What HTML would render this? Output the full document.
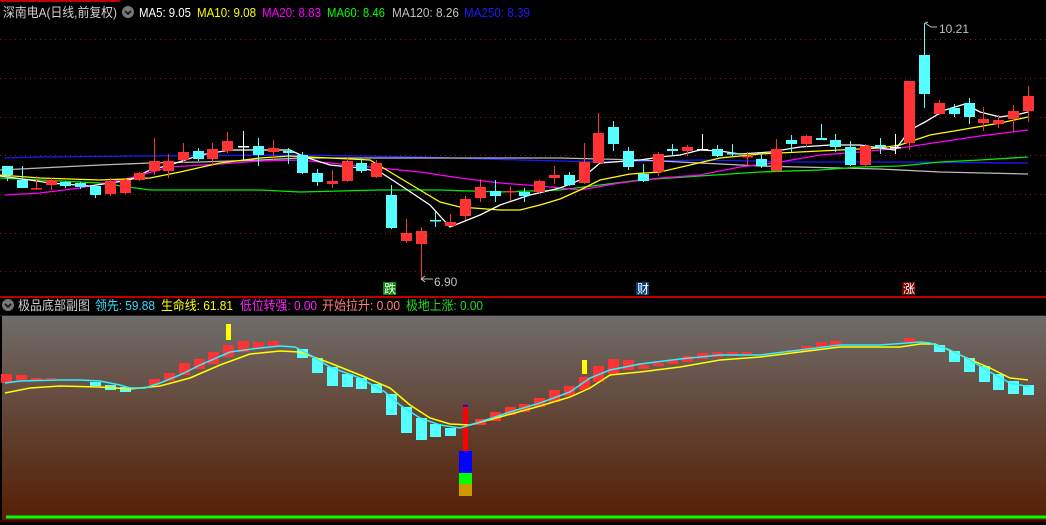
<!DOCTYPE html>
<html><head><meta charset="utf-8">
<style>
html,body{margin:0;padding:0;background:#000;width:1046px;height:525px;overflow:hidden}
svg{position:absolute;left:0;top:0}
text{font-family:"Liberation Sans","Noto Sans CJK SC",sans-serif}
</style></head>
<body>
<svg id="s" width="1046" height="525" xmlns="http://www.w3.org/2000/svg">
<defs>
<linearGradient id="g" x1="0" y1="0" x2="0" y2="1">
<stop offset="0" stop-color="#6f6c6b"/>
<stop offset="0.5" stop-color="#624434"/>
<stop offset="1" stop-color="#551f05"/>
</linearGradient>
</defs>
<rect x="0" y="0" width="1046" height="525" fill="#000"/>
<line x1="0" y1="1" x2="120" y2="1" stroke="#c00000" stroke-width="2"/>
<g id="grid" stroke="#8a1a1a" stroke-width="1" stroke-dasharray="1,4"></g>
<g id="top"></g>
<line x1="0" y1="297" x2="1046" y2="297" stroke="#c00000" stroke-width="2"/>
<rect x="2" y="316" width="1044" height="204" fill="url(#g)"/>
<line x1="0" y1="315.5" x2="1046" y2="315.5" stroke="#222" stroke-width="1"/>
<g id="bot"></g>
<line x1="6" y1="517" x2="1046" y2="517" stroke="#00ff00" stroke-width="3"/>
<line x1="0" y1="521" x2="1046" y2="521" stroke="#a00000" stroke-width="1"/>

<!-- header top -->
<text x="3" y="17" font-size="13" fill="#d0d0d0" textLength="114" lengthAdjust="spacingAndGlyphs">深南电A(日线,前复权)</text>
<circle cx="128" cy="12" r="6" fill="#777"/>
<path d="M125 11 L128 14 L131 11" stroke="#111" stroke-width="1.6" fill="none"/>
<text x="139" y="17" font-size="13" fill="#ffffff" textLength="52" lengthAdjust="spacingAndGlyphs">MA5: 9.05</text>
<text x="197" y="17" font-size="13" fill="#ffff00" textLength="59" lengthAdjust="spacingAndGlyphs">MA10: 9.08</text>
<text x="262" y="17" font-size="13" fill="#ff00ff" textLength="59" lengthAdjust="spacingAndGlyphs">MA20: 8.83</text>
<text x="327" y="17" font-size="13" fill="#00ff00" textLength="58" lengthAdjust="spacingAndGlyphs">MA60: 8.46</text>
<text x="392" y="17" font-size="13" fill="#c0c0c0" textLength="67" lengthAdjust="spacingAndGlyphs">MA120: 8.26</text>
<text x="464" y="17" font-size="13" fill="#1a1aff" textLength="66" lengthAdjust="spacingAndGlyphs">MA250: 8.39</text>

<!-- header bottom -->
<circle cx="8" cy="305" r="6" fill="#777"/>
<path d="M5 304 L8 307 L11 304" stroke="#111" stroke-width="1.6" fill="none"/>
<text x="18" y="310" font-size="13" fill="#d0d0d0" textLength="72" lengthAdjust="spacingAndGlyphs">极品底部副图</text>
<text x="95" y="310" font-size="13" fill="#33ddff" textLength="60" lengthAdjust="spacingAndGlyphs">领先: 59.88</text>
<text x="161" y="310" font-size="13" fill="#ffff00" textLength="72" lengthAdjust="spacingAndGlyphs">生命线: 61.81</text>
<text x="240" y="310" font-size="13" fill="#ff22ff" textLength="77" lengthAdjust="spacingAndGlyphs">低位转强: 0.00</text>
<text x="322" y="310" font-size="13" fill="#ff8080" textLength="78" lengthAdjust="spacingAndGlyphs">开始拉升: 0.00</text>
<text x="406" y="310" font-size="13" fill="#22dd22" textLength="77" lengthAdjust="spacingAndGlyphs">极地上涨: 0.00</text>

<!-- markers -->
<rect x="383" y="282" width="13" height="13" fill="#0a8a0a"/>
<text x="384" y="293" font-size="12" fill="#fff">跌</text>
<rect x="636" y="282" width="13" height="13" fill="#0a3e78"/>
<text x="637" y="293" font-size="12" fill="#fff">财</text>
<rect x="902" y="282" width="13" height="13" fill="#7a0000"/>
<text x="903" y="293" font-size="12" fill="#fff">涨</text>
<text x="434" y="286" font-size="12" fill="#c0c0c0">6.90</text>
<path d="M421 279 L433 279 M421 279 L425 276 M421 279 L425 282" stroke="#c0c0c0" fill="none"/>
<text x="939" y="33" font-size="12" fill="#c0c0c0">10.21</text>
<path d="M925 23 L931 27 L937 27 M925 23 L928 22" stroke="#c0c0c0" fill="none"/>
</svg>
<script>
var NS="http://www.w3.org/2000/svg";
function el(p,t,a){var e=document.createElementNS(NS,t);for(var k in a)e.setAttribute(k,a[k]);document.getElementById(p).appendChild(e);return e;}
[39,78,117,155,194,233,271].forEach(function(y){el("grid","line",{x1:0,y1:y+.5,x2:1046,y2:y+.5});});
function pl(p,pts,c,w){el(p,"polyline",{points:pts.map(function(q){return q.join(",")}).join(" "),fill:"none",stroke:c,"stroke-width":w||1.3});}
pl("top",[[5,158],[40,157],[140,156],[300,155],[420,157],[520,160],[600,162],[700,160],[800,162],[900,162],[1028,163]],"#1a1aff");
pl("top",[[0,170],[40,168],[100,165],[150,163],[200,162],[260,160],[300,158],[380,158],[460,158],[560,158],[640,160],[700,163],[760,166],[840,168],[880,169],[940,172],[1028,174]],"#bbbbbb");
pl("top",[[0,178],[100,183],[150,190],[200,190],[260,190],[300,192],[380,190],[440,190],[500,192],[560,190],[640,180],[700,176],[760,172],[820,170],[860,167],[900,166],[940,162],[980,160],[1028,157]],"#00ee00");
pl("top",[[5,195],[40,193],[80,188],[130,178],[170,167],[220,164],[260,161],[300,160],[340,164],[380,168],[420,172],[460,178],[500,183],[540,186],[580,190],[620,183],[660,178],[700,175],[740,167],[780,162],[820,155],[860,152],[900,148],[940,142],[980,136],[1028,130]],"#ff00ff");
pl("top",[[0,175],[40,178],[100,180],[150,178],[180,172],[220,163],[260,158],[290,156],[310,157],[370,160],[390,172],[420,190],[440,202],[460,207],[500,210],[520,210],[540,205],[560,199],[580,190],[600,180],[630,174],[660,172],[690,165],[720,158],[760,154],[800,152],[840,150],[880,148],[900,145],[930,135],[960,130],[1000,123],[1028,117]],"#ffff00");
pl("top",[[0,176],[30,180],[50,183],[90,186],[130,180],[150,170],[170,165],[200,155],[230,150],[290,150],[305,157],[330,165],[360,168],[380,172],[400,185],[430,205],[450,227],[480,215],[500,205],[530,195],[560,188],[580,180],[600,163],[640,160],[660,157],[680,155],[700,150],[720,151],[740,154],[770,152],[800,147],[830,145],[860,145],[880,148],[895,150],[910,130],[925,122],[945,110],[965,104],[980,112],[1000,117],[1020,114],[1028,112]],"#ffffff");
var R="#ff3333",C="#55ffff",W="#ffffff";
var cd=[[7,166,175,166,181,C],[22,180,188,166,188,C],[36,188,188,176,190,R],[51,180,185,178,190,R],[65,182,186,181,188,C],[80,183,187,182,189,C],[95,186,195,185,198,C],[110,181,194,178,196,R],[125,180,193,178,194,R],[139,173,180,172,181,R],[154,161,171,138,175,R],[168,161,171,154,178,R],[183,152,160,143,163,R],[198,151,159,148,161,C],[212,149,159,143,166,R],[227,141,151,132,153,R],[243,146,146,131,160,W],[258,146,155,138,166,C],[273,148,152,140,160,R],[288,151,153,148,164,C],[302,155,173,152,174,C],[317,173,182,169,186,C],[332,181,184,170,188,R],[347,161,181,158,182,R],[361,163,171,158,173,C],[376,163,177,160,178,R],[391,195,228,185,229,C],[406,233,241,219,243,R],[421,231,244,227,280,R],[435,220,220,212,227,C],[450,222,226,214,226,R],[465,199,216,196,220,R],[480,187,198,179,202,R],[495,191,196,180,202,C],[510,191,191,186,201,R],[524,192,196,188,202,C],[539,181,192,180,193,R],[554,175,178,166,184,R],[569,175,185,172,186,C],[584,162,183,143,184,R],[598,133,163,113,164,R],[613,127,144,121,151,C],[628,151,167,147,170,C],[643,174,181,164,182,C],[658,154,172,152,176,R],[672,149,151,144,156,C],[687,147,151,145,156,R],[702,149,149,134,150,W],[717,149,156,145,157,C],[732,153,153,144,157,C],[747,156,156,152,165,R],[761,159,166,153,168,C],[776,149,171,139,172,R],[791,140,144,135,152,C],[806,136,144,135,147,R],[821,138,140,124,140,C],[835,140,147,134,152,C],[850,147,165,141,166,C],[865,146,165,144,166,R],[880,145,147,138,154,C],[895,147,147,134,154,W],[909,81,143,81,150,R],[924,55,94,23,108,C],[939,103,114,100,115,R],[954,108,114,104,117,C],[969,103,117,98,124,C],[983,119,123,107,131,R],[998,120,124,115,128,R],[1013,111,119,105,132,R],[1028,96,111,86,122,R]];
cd.forEach(function(c){
 el("top","line",{x1:c[0]+.5,y1:c[3],x2:c[0]+.5,y2:c[4],stroke:c[5],"stroke-width":1});
 if(c[2]-c[1]<1){el("top","rect",{x:c[0]-5,y:c[1],width:11,height:1.5,fill:c[5]});}
 else el("top","rect",{x:c[0]-5,y:c[1],width:11,height:c[2]-c[1],fill:c[5]});
});
var bb=[[1,12,374,383,R],[16,27,375,380,R],[31,42,378,380,R],[46,56,378,379,R],[90,101,382,386,C],[105,116,385,390,C],[120,131,387,392,C],[149,160,379,385,R],[164,175,373,381,R],[179,190,363,375,R],[194,205,359,369,R],[208,219,352,364,R],[223,234,345,357,R],[238,249,341,352,R],[253,264,342,349,R],[268,279,341,346,R],[297,308,349,358,C],[312,323,358,373,C],[327,338,367,386,C],[342,353,374,387,C],[356,367,378,389,C],[371,382,384,393,C],[386,397,394,415,C],[401,412,407,433,C],[416,427,418,440,C],[430,441,424,437,C],[445,456,428,436,C],[475,486,419,425,R],[490,501,412,421,R],[505,516,407,415,R],[519,530,404,412,R],[534,545,398,407,R],[549,560,390,402,R],[564,575,386,396,R],[579,590,377,390,R],[593,604,366,382,R],[608,619,359,374,R],[623,634,360,370,R],[638,649,365,369,R],[653,664,363,366,R],[667,678,360,364,R],[682,693,356,362,R],[697,708,353,359,R],[712,723,352,357,R],[727,738,352,355,R],[742,752,352,354,R],[786,797,350,352,R],[801,812,346,351,R],[816,827,342,348,R],[830,841,341,345,R],[904,915,338,342,R],[934,945,345,352,C],[949,960,351,362,C],[964,975,358,372,C],[979,990,366,382,C],[993,1004,374,390,C],[1008,1019,381,394,C],[1023,1034,385,395,C]];
bb.forEach(function(b){el("bot","rect",{x:b[0],y:b[2],width:b[1]-b[0],height:b[3]-b[2],fill:b[4]});});
el("bot","rect",{x:226,y:324,width:5,height:16,fill:"#ffff00"});
el("bot","rect",{x:582,y:360,width:5,height:14,fill:"#ffff00"});
el("bot","rect",{x:459,y:451,width:13,height:22,fill:"#0000ff"});
el("bot","rect",{x:459,y:473,width:13,height:11,fill:"#00ff00"});
el("bot","rect",{x:459,y:484,width:13,height:12,fill:"#cc9900"});
el("bot","rect",{x:463,y:406,width:5,height:45,fill:"#ff0000"});
el("bot","rect",{x:463,y:405,width:5,height:1.5,fill:"#0000ff"});
pl("bot",[[5,393],[30,388],[60,386],[100,387],[130,389],[160,386],[190,378],[220,365],[250,354],[280,351],[300,352],[330,363],[360,375],[390,388],[410,405],[430,418],[450,424],[470,425],[500,417],[540,406],[570,397],[590,388],[610,375],[640,372],[680,367],[720,360],[760,357],[800,352],[840,347],[900,347],[920,344],[935,344],[960,355],[990,368],[1010,378],[1028,380]],"#ffff00",1.5);
pl("bot",[[5,383],[20,381],[60,380],[80,380],[100,381],[120,385],[130,388],[145,388],[160,383],[180,375],[200,365],[230,352],[260,348],[280,346],[295,347],[310,355],[330,367],[360,378],[385,392],[400,405],[420,418],[440,425],[460,428],[480,422],[510,412],[540,403],[570,392],[590,378],[610,370],[640,364],[680,359],[720,355],[760,355],[800,350],[840,345],[880,345],[920,342],[930,343],[950,350],[970,360],[990,372],[1010,383],[1030,387]],"#33eeff",1.5);
</script>
</body></html>
